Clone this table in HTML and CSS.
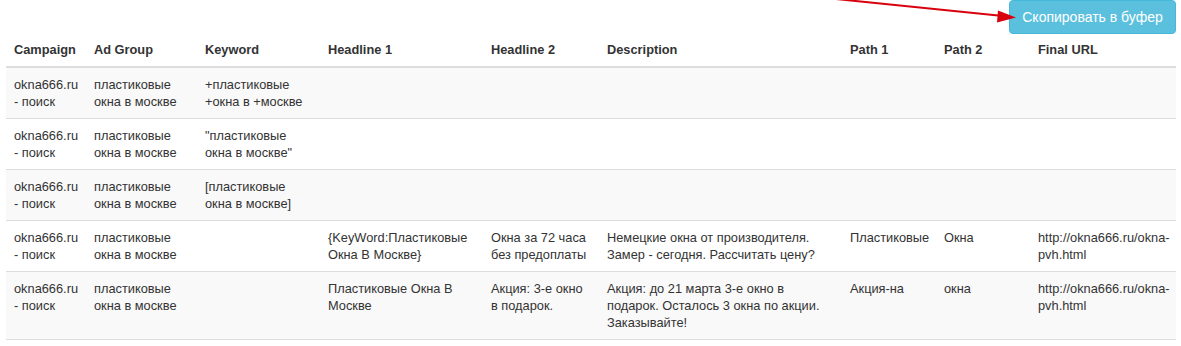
FILE: index.html
```html
<!DOCTYPE html>
<html lang="ru">
<head>
<meta charset="utf-8">
<title>Ads</title>
<link rel="stylesheet" href="styles.css">
</head>
<body>
<div class="page">
  <div class="toolbar">
    <button class="btn-copy" type="button">Скопировать в буфер</button>
    <svg class="arrow" width="200" height="30" viewBox="0 0 200 30">
      <line x1="0" y1="-1" x2="172" y2="16.5" stroke="#d9000d" stroke-width="2"/>
      <polygon points="162,10.5 180,17.5 161,22.5" fill="#d9000d"/>
    </svg>
  </div>
  <table class="ads">
    <colgroup>
      <col class="c1"><col class="c2"><col class="c3"><col class="c4"><col class="c5"><col class="c6"><col class="c7"><col class="c8"><col class="c9">
    </colgroup>
    <thead>
      <tr><th>Campaign</th><th>Ad Group</th><th>Keyword</th><th>Headline 1</th><th>Headline 2</th><th>Description</th><th>Path 1</th><th>Path 2</th><th>Final URL</th></tr>
    </thead>
    <tbody>
      <tr><td>okna666.ru - поиск</td><td>пластиковые окна в москве</td><td>+пластиковые +окна в +москве</td><td></td><td></td><td></td><td></td><td></td><td></td></tr>
      <tr><td>okna666.ru - поиск</td><td>пластиковые окна в москве</td><td>"пластиковые окна в москве"</td><td></td><td></td><td></td><td></td><td></td><td></td></tr>
      <tr><td>okna666.ru - поиск</td><td>пластиковые окна в москве</td><td>[пластиковые окна в москве]</td><td></td><td></td><td></td><td></td><td></td><td></td></tr>
      <tr><td>okna666.ru - поиск</td><td>пластиковые окна в москве</td><td></td><td>{KeyWord:Пластиковые Окна В Москве}</td><td>Окна за 72 часа без предоплаты</td><td>Немецкие окна от производителя. Замер - сегодня. Рассчитать цену?</td><td>Пластиковые</td><td>Окна</td><td>http://okna666.ru/okna-pvh.html</td></tr>
      <tr><td>okna666.ru - поиск</td><td>пластиковые окна в москве</td><td></td><td>Пластиковые Окна В Москве</td><td>Акция: 3-е окно в подарок.</td><td>Акция: до 21 марта 3-е окно в подарок. Осталось 3 окна по акции. Заказывайте!</td><td>Акция-на</td><td>окна</td><td>http://okna666.ru/okna-pvh.html</td></tr>
    </tbody>
  </table>
</div>
</body>
</html>
```

FILE: styles.css
```css
html, body {
  margin: 0;
  padding: 0;
  background: #fff;
}
.page {
  padding: 0 5px 0 6px;
  font-family: "Liberation Sans", Arial, Helvetica, sans-serif;
  color: #333;
}
.toolbar {
  position: relative;
  display: flex;
  justify-content: flex-end;
  align-items: flex-start;
  height: 33px;
}
.btn-copy {
  flex: none;
  height: 34px;
  box-sizing: border-box;
  padding: 0 12px;
  margin-top: 0;
  width: 167px;
  font-family: "Liberation Sans", Arial, Helvetica, sans-serif;
  font-size: 14px;
  color: #fff;
  background: #5bc0de;
  border: 1px solid #46b8da;
  border-radius: 4px;
  white-space: nowrap;
}
.arrow {
  position: absolute;
  left: 830px;
  top: 0;
  overflow: visible;
}
.ads {
  width: 100%;
  table-layout: fixed;
  border-collapse: collapse;
  border-spacing: 0;
  font-size: 12.8px;
  line-height: 17px;
  border-bottom: 1px solid #ddd;
}
.c1 { width: 80px; }
.c2 { width: 111px; }
.c3 { width: 123px; }
.c4 { width: 163px; }
.c5 { width: 116px; }
.c6 { width: 243px; }
.c7 { width: 94px; }
.c8 { width: 94px; }
.c9 { width: auto; }
.ads th {
  text-align: left;
  font-weight: bold;
  padding: 8px 8px;
  vertical-align: bottom;
  border-bottom: 2px solid #ddd;
}
.ads td {
  padding: 8px 8px;
  vertical-align: top;
  border-top: 1px solid #ddd;
  overflow-wrap: normal;
}
.ads tbody tr:first-child td {
  border-top: 0;
}
.ads tbody tr:nth-child(odd) {
  background: #f9f9f9;
}
```
